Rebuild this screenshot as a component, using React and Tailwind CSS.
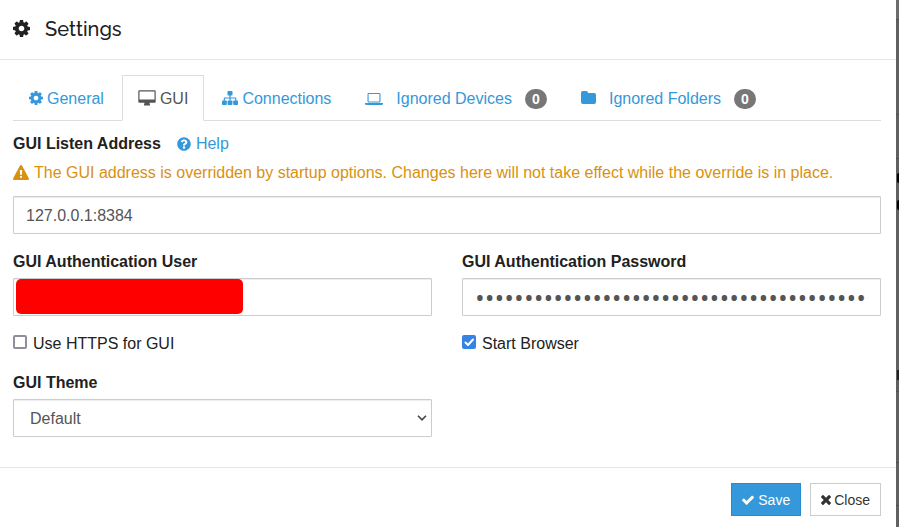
import React, { useState } from "react";
import { FaQuestionCircle } from "react-icons/fa";

function Cog({ className }) {
  return (
    <svg viewBox="0 128 1536 1536" className={className} fill="currentColor" aria-hidden="true">
      <path d="M1024 896q0-106-75-181t-181-75-181 75-75 181 75 181 181 75 181-75 75-181zm512-109v222q0 12-8 23t-20 13l-185 28q-19 54-39 91 35 50 107 138 10 12 10 25t-9 23q-27 37-99 108t-94 71q-12 0-26-9l-138-108q-44 23-91 38-16 136-29 186-7 28-36 28h-222q-14 0-24.500-8.500t-11.500-21.500l-28-184q-49-16-90-37l-141 107q-10 9-25 9-14 0-25-11-126-114-165-168-7-10-7-23 0-12 8-23 15-21 51-66.500t54-70.500q-27-50-41-99l-183-27q-13-2-21-12.500t-8-23.500v-222q0-12 8-23t19-13l186-28q14-46 39-92-40-57-107-138-10-12-10-24 0-10 9-23 26-36 98.500-107.500t94.500-71.500q13 0 26 10l138 107q44-23 91-38 16-136 29-186 7-28 36-28h222q14 0 24.500 8.500t11.500 21.500l28 184q49 16 90 37l142-107q9-9 24-9 13 0 25 10 129 119 165 170 7 8 7 22 0 12-8 23-15 21-51 66.500t-54 70.500q26 50 41 98l183 28q13 2 21 12.500t8 23.500z" />
    </svg>
  );
}

function Desktop() {
  return (
    <svg viewBox="0 0 18 16" className="mb-0.5 h-4 w-[18px]" fill="currentColor" aria-hidden="true">
      <path fillRule="evenodd" d="M1.300 0.300h15.400q1 0 1 1v10.400q0 1-1 1H11.500q.1 1.200 .5 1.700v.9q0 .2-.3.200H6.300q-.3 0-.3-.2v-.9q.4-.5.500-1.700H1.300q-1 0-1-1V1.300q0-1 1-1zM1.500 1.400v8.200h15V1.400z" />
    </svg>
  );
}

function Sitemap() {
  return (
    <svg viewBox="0 0 16 14" className="mb-0.5 h-[14px] w-4" fill="currentColor" aria-hidden="true">
      <rect x="5.500" y="0" width="5" height="4.600" rx="0.800" />
      <rect x="0" y="9.400" width="4.800" height="4.600" rx="0.800" />
      <rect x="5.600" y="9.400" width="4.800" height="4.600" rx="0.800" />
      <rect x="11.200" y="9.400" width="4.800" height="4.600" rx="0.800" />
      <path d="M7.400 4h1.200v2.400h4.700q1 0 1 1v2.400h-1.200V7.600H8.600v2.200H7.400V7.600H2.900v2.200H1.700V7.400q0-1 1-1h4.700z" />
    </svg>
  );
}

function Laptop() {
  return (
    <svg viewBox="0 0 18 12" className="h-3 w-[18px]" fill="currentColor" aria-hidden="true">
      <path fillRule="evenodd" d="M3.700 0h10.600q1.200 0 1.200 1.200v7.100q0 1.200-1.200 1.200H3.700q-1.200 0-1.200-1.200V1.200Q2.500 0 3.700 0zM3.600 1.100v7.300h10.800V1.100z" />
      <path d="M0 10h18v.8q0 1.200-1.500 1.200h-15Q0 12 0 10.800z" />
    </svg>
  );
}

function Folder() {
  return (
    <svg viewBox="0 0 15 13" className="mb-[3px] h-[13px] w-[15px]" fill="currentColor" aria-hidden="true">
      <path d="M1.900 0h3.200Q7 0 7 1.900h6.100Q15 1.900 15 3.800v7.300q0 1.900-1.900 1.900H1.900Q0 13 0 11.100V1.900Q0 0 1.900 0z" />
    </svg>
  );
}

function Warning() {
  return (
    <svg viewBox="0 0 16 15" className="mb-0.5 h-[15px] w-4" fill="currentColor" aria-hidden="true">
      <path fillRule="evenodd" d="M7 .6q1-1.200 2 0l6.800 12.600q.6 1.500-1 1.700H1.200q-1.600-.2-1-1.700zM6.800 5l.3 4.800h1.800L9.200 5zM7 10.900v1.800h2v-1.800z" />
    </svg>
  );
}

function Check({ className }) {
  return (
    <svg viewBox="121 270 1550 1252" className={className} fill="currentColor" aria-hidden="true">
      <path d="M1671 566q0 40-28 68l-724 724-136 136q-28 28-68 28t-68-28l-136-136-362-362q-28-28-28-68t28-68l136-136q28-28 68-28t68 28l294 295 656-657q28-28 68-28t68 28l136 136q28 28 28 68z" />
    </svg>
  );
}

function Times({ className }) {
  return (
    <svg viewBox="302 366 1188 1188" className={className} fill="currentColor" aria-hidden="true">
      <path d="M1490 1322q0 40-28 68l-136 136q-28 28-68 28t-68-28l-294-294-294 294q-28 28-68 28t-68-28l-136-136q-28-28-28-68t28-68l294-294-294-294q-28-28-28-68t28-68l136-136q28-28 68-28t68 28l294 294 294-294q28-28 68-28t68 28l136 136q28 28 28 68t-28 68l-294 294 294 294q28 28 28 68z" />
    </svg>
  );
}

const control =
  "block h-[38px] w-full rounded-[1px] border border-[#ccc] bg-white px-3 text-[#555] shadow-[inset_0_1px_1px_rgba(0,0,0,0.075)] outline-none";

function Badge({ children }) {
  return (
    <span className="ml-[13px] flex h-5 w-[22px] items-center justify-center rounded-full bg-[#777] text-sm leading-5 font-bold text-white">
      {children}
    </span>
  );
}

function Tab({ active, icon, label, badge, wide, onSelect }) {
  return (
    <li className="-mb-px">
      <a
        href="#"
        onClick={(e) => {
          e.preventDefault();
          onSelect();
        }}
        className={`flex items-center rounded-t-[1px] border px-[15px] pt-[11px] pb-[9px] leading-6 ${
          active ? "border-[#ddd] border-b-white bg-white text-[#555]" : "border-transparent text-[#3498db]"
        }`}
      >
        {icon}
        <span className={wide ? "ml-[13px]" : "ml-1"}>{label}</span>
        {badge !== undefined && <Badge>{badge}</Badge>}
      </a>
    </li>
  );
}

function CheckOption({ id, label, checked, onChange }) {
  return (
    <div className="mt-4 flex items-center leading-6">
      <span className="relative mr-1.5 flex h-[18px] w-[14px]">
        <input
          id={id}
          type="checkbox"
          checked={checked}
          onChange={(e) => onChange(e.target.checked)}
          className="h-[14px] w-[14px] appearance-none rounded-[2px] border-2 border-[#8f8f9d] bg-white checked:border-[#3584e4] checked:bg-[#3584e4]"
        />
        {checked && (
          <svg viewBox="0 0 14 14" className="pointer-events-none absolute top-0 left-0 h-[14px] w-[14px]" fill="none" stroke="white" strokeWidth="2" strokeLinecap="round" strokeLinejoin="round" aria-hidden="true">
            <path d="M3.500 7.500l2.500 2.500l5-5.500" />
          </svg>
        )}
      </span>
      <label htmlFor={id}>{label}</label>
    </div>
  );
}

export default function App() {
  const [tab, setTab] = useState(1);
  const [address, setAddress] = useState("127.0.0.1:8384");
  const [user, setUser] = useState("");
  const [password, setPassword] = useState("x".repeat(60));
  const [https, setHttps] = useState(false);
  const [browser, setBrowser] = useState(true);

  const tabs = [
    { label: "General", icon: <Cog className="mb-0.5 h-[14px] w-[14px]" /> },
    { label: "GUI", icon: <Desktop /> },
    { label: "Connections", icon: <Sitemap /> },
    { label: "Ignored Devices", icon: <Laptop />, badge: 0, wide: true },
    { label: "Ignored Folders", icon: <Folder />, badge: 0, wide: true },
  ];

  return (
    <div className="flex min-h-screen bg-[#606060] font-['Liberation_Sans',Arial,sans-serif] text-base text-[#212121]">
      <main className="min-w-0 flex-1 bg-white">
        <header className="flex h-[60px] items-center border-b border-[#e5e5e5] pb-0.5 pl-[13px]">
          <Cog className="h-[17px] w-[17px]" />
          <h1 className="ml-[15px] font-['Raleway',Lato,sans-serif] text-xl font-medium">Settings</h1>
        </header>

        <div className="pt-[15px] pr-[15px] pb-[15px] pl-[13px]">
          <ul className="flex gap-0.5 border-b border-[#ddd]">
            {tabs.map((t, i) => (
              <Tab key={t.label} {...t} active={tab === i} onSelect={() => setTab(i)} />
            ))}
          </ul>

          <form className="pt-[11px] pb-[15px]" onSubmit={(e) => e.preventDefault()}>
            <div className="flex items-center leading-6">
              <label htmlFor="address" className="font-bold">GUI Listen Address</label>
              <a href="#help" className="ml-4 flex items-center gap-[5px] text-[#3498db]">
                <FaQuestionCircle className="h-[14px] w-[14px]" />
                Help
              </a>
            </div>
            <p className="mt-[5px] mb-[11px] flex items-center gap-[5px] leading-6 text-[#d9910f]">
              <Warning />
              The GUI address is overridden by startup options. Changes here will not take effect while the override is in place.
            </p>
            <input id="address" type="text" value={address} onChange={(e) => setAddress(e.target.value)} className={`${control} pt-0.5`} />

            <div className="mt-4 grid grid-cols-2 gap-x-[30px]">
              <div>
                <label htmlFor="user" className="mb-1 block leading-6 font-bold">GUI Authentication User</label>
                <div className="relative">
                  <input id="user" type="text" value={user} onChange={(e) => setUser(e.target.value)} className={`${control} pt-0.5`} />
                  <span className="pointer-events-none absolute top-px left-[3px] h-[35px] w-[227px] rounded-[5px] bg-[#f00]" />
                </div>
                <CheckOption id="https" label="Use HTTPS for GUI" checked={https} onChange={setHttps} />
              </div>
              <div>
                <label htmlFor="password" className="mb-1 block leading-6 font-bold">GUI Authentication Password</label>
                <input
                  id="password"
                  type="password"
                  value={password}
                  onChange={(e) => setPassword(e.target.value)}
                  className={`${control} font-['Open_Sans',sans-serif] text-[26px]`}
                />
                <CheckOption id="browser" label="Start Browser" checked={browser} onChange={setBrowser} />
              </div>
              <div className="mt-[15px]">
                <label htmlFor="theme" className="mb-1 block leading-6 font-bold">GUI Theme</label>
                <div className="relative">
                  <select id="theme" defaultValue="Default" className={`${control} appearance-none pt-0.5 pl-4`}>
                    <option>Default</option>
                    <option>Dark</option>
                    <option>Black</option>
                    <option>Light</option>
                  </select>
                  <svg viewBox="0 0 10 6" className="pointer-events-none absolute top-4 right-[5px] h-1.5 w-[10px]" fill="none" stroke="#444" strokeWidth="1.600" aria-hidden="true">
                    <path d="M1 0.800l4 4l4-4" />
                  </svg>
                </div>
              </div>
            </div>
          </form>
        </div>

        <footer className="flex justify-end gap-[9px] border-t border-[#e5e5e5] pt-[15px] pr-[15px] text-sm">
          <button type="button" className="flex h-[33px] items-center gap-1 border border-[#258cd1] bg-[#3498db] px-[10px] text-white">
            <Check className="h-[10px] w-3" />
            Save
          </button>
          <button type="button" className="flex h-[33px] items-center gap-[3px] border border-[#ccc] bg-white px-[10px] text-[#333]">
            <Times className="h-[10px] w-[10px]" />
            Close
          </button>
        </footer>
      </main>
      <aside className="flex w-[3px] flex-col items-end" aria-hidden="true">
        <div className="h-5 w-full border-b border-[#505050] bg-[#6c6c6c]" />
        <div className="h-[95px] w-full border-b border-[#505050]" />
        <div className="h-11 w-full border-b border-[#505050]" />
        <div className="mt-[14px] h-[10px] w-0.5 rounded-l-full bg-black" />
        <div className="mt-[17px] h-[10px] w-0.5 rounded-l-full bg-black" />
        <div className="mt-[160px] h-[10px] w-0.5 bg-[#222]" />
        <div className="h-3 w-full border-b border-[#505050]" />
        <div className="h-[71px] w-full border-b border-[#505050]" />
        <div className="h-[43px] w-full border-b border-[#505050]" />
      </aside>
    </div>
  );
}
